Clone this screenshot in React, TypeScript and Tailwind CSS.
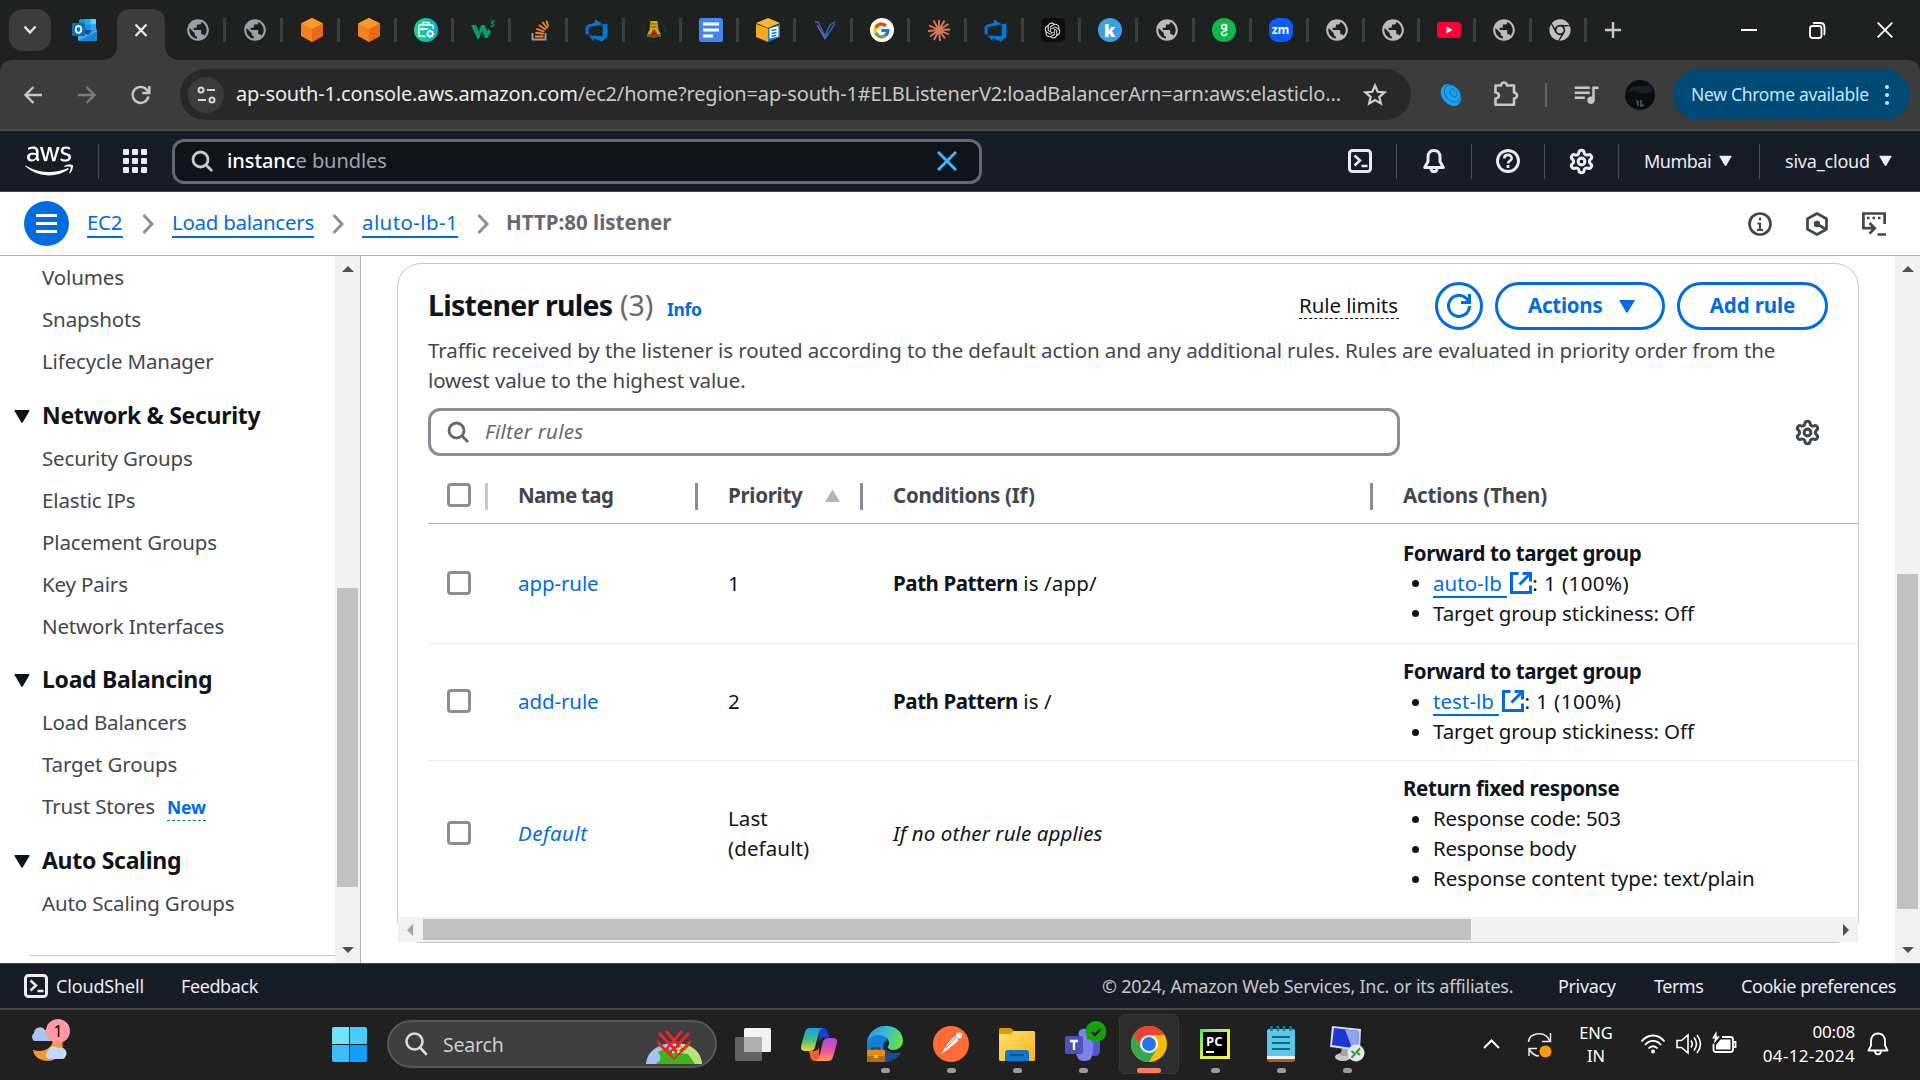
import React from "react";
import { Settings } from "lucide-react";
import { FaAws, FaChrome } from "react-icons/fa";
import { FcGoogle } from "react-icons/fc";
import { MdPublic, MdQueueMusic } from "react-icons/md";
import { VscAzureDevops } from "react-icons/vsc";
import { RiOpenaiFill } from "react-icons/ri";

/* ---------- tab favicons ---------- */

const Globe = ({ light }: { light?: boolean }) => (
  <MdPublic size={26} className={light ? "text-[#b9b9b9]" : "text-[#9aa0a6]"} />
);

const OrangeCube = () => (
  <svg width="24" height="24" viewBox="0 0 24 24">
    <path d="M12 0 23 5.500V18L12 24 1 18V5.500z" fill="#f58220" />
    <path d="M12 0 23 5.500 12 11 1 5.500z" fill="#fb9a2c" />
    <path d="M12 11 23 5.500V18L12 24z" fill="#ea6a1c" />
  </svg>
);

const Briefcase = () => (
  <svg width="24" height="24" viewBox="0 0 24 24">
    <defs>
      <linearGradient id="bcase" x1="0" y1="0" x2="1" y2="0">
        <stop offset=".2" stopColor="#0fd68c" />
        <stop offset="1" stopColor="#12a8e0" />
      </linearGradient>
    </defs>
    <circle cx="12" cy="12" r="12" fill="url(#bcase)" />
    <g fill="none" stroke="#fff" strokeWidth="1.500">
      <path d="M11.500 18.200H6a1.200 1.200 0 0 1-1.200-1.200V8.200A1.200 1.200 0 0 1 6 7h12a1.200 1.200 0 0 1 1.200 1.200V11M4.800 11H14M9 7V4.500h6V7M8.500 9.500v3" />
      <circle cx="16.200" cy="15.700" r="2.500" />
      <path d="M16.200 11.700v1.500M16.200 18.200v1.500M12.200 15.700h1.500M18.700 15.700h1.500M13.500 13l1 1M18 17.500l1 1M19 13l-1 1M14.500 17.500l-1 1" />
    </g>
  </svg>
);

const W3 = () => (
  <svg width="24" height="22" viewBox="0 0 24 22">
    <path d="M0 6h5l3 7 2-7h3.500l3 6 1-2.500 2.500 3.500-3.500 6h-2.500L11 12l-3 8H6.500z" fill="#04a068" />
    <path d="M19.500 2h3.300L20.800 4.500c3 .2 2.600 3.500-1.300 2.700" fill="none" stroke="#04a068" strokeWidth="1.200" />
  </svg>
);

const StackOverflow = () => (
  <svg width="18" height="21" viewBox="0 0 18 21" fill="none">
    <path d="M1.500 13v6.500H14.500V13" stroke="#9a9ca0" strokeWidth="1.900" />
    <path d="M4 16.500h8.500M4.300 12.800l8.400 1M5.300 8.800l8 2.800M7.800 5l7 4.700M11.500 2l5 6.500M15.500.7l2 6" stroke="#f48024" strokeWidth="1.900" />
  </svg>
);

const AzureIcon = () => <VscAzureDevops size={25} className="text-[#0078d7]" />;

const Temple = () => (
  <svg width="24" height="24" viewBox="0 0 24 24">
    <circle cx="12" cy="12" r="11" fill="#16241c" stroke="#1d4a30" strokeDasharray="2 1.500" />
    <path d="M8.500 3h7l1 9 2.500 4.500h-14l2.500-4.500z" fill="#d9a21b" />
    <path d="M9 6h6M9 9h6" stroke="#7c5a10" />
    <path d="M12 11l3 4v5H9v-5z" fill="#a12a2a" />
    <path d="M5 18h4M15 18h4" stroke="#8f7a1e" strokeWidth="1.500" />
  </svg>
);

const Docs = () => (
  <svg width="24" height="24" viewBox="0 0 24 24">
    <rect width="24" height="24" rx="2.500" fill="#4285f4" />
    <path d="M4 6h16M4 12h16M4 18h10" stroke="#fff" strokeWidth="3" />
  </svg>
);

const Box = () => (
  <svg width="25" height="24" viewBox="0 0 25 24">
    <path d="M1 5 13 0l12 5-12 5z" fill="#f7b733" />
    <path d="M1 6l12 4.500V24L1 19z" fill="#f3a820" />
    <path d="M13 10.500 25 6v13l-12 5z" fill="#147eba" />
    <path d="M14.500 10.500 23.500 8v10.500l-9 2z" fill="#fff" />
    <path d="M16.500 12.500l5-1M16.500 15.500l5-1M16.500 18.200l5-1" stroke="#147eba" strokeWidth="1.400" />
  </svg>
);

const Vee = () => (
  <svg width="22" height="20" viewBox="0 0 22 20" fill="none" strokeWidth="1.400">
    <path d="M1 2h3l7 14" stroke="#6a4bc4" />
    <path d="M3 5l8 13.500 3-5" stroke="#2b8fd8" />
    <path d="M21 2l-5 3-5.500 12M20.500 4l-8 13" stroke="#2570c9" />
  </svg>
);

const GoogleTab = () => (
  <span className="flex size-6 items-center justify-center rounded-full bg-white">
    <FcGoogle size={19} />
  </span>
);

const Burst = () => (
  <svg width="24" height="24" viewBox="-12 -12 24 24" stroke="#d97757" strokeWidth="1.900">
    <path d="M0 0 0-10M0 0 5.500-9.500M0 0 9.500-6M0 0 11-.5M0 0 10 4.500M0 0 6 8.500M0 0 1 11M0 0-5 10M0 0-9 6.500M0 0-11 1M0 0-10-4.500M0 0-5.500-9.500" />
  </svg>
);

const OpenAi = () => (
  <span className="flex size-6 items-center justify-center rounded-[5px] bg-[#0b0b0b]">
    <RiOpenaiFill size={19} className="text-[#e6e6e6]" />
  </span>
);

const KTab = () => (
  <span className="flex size-6 items-center justify-center rounded-full bg-[#3aa0e4] font-['Open_Sans',sans-serif] text-[17px] leading-none font-extrabold text-white">
    k
  </span>
);

const GreenG = () => (
  <svg width="24" height="24" viewBox="0 0 24 24">
    <circle cx="12" cy="12" r="12" fill="#0fb84c" />
    <circle cx="12" cy="8.700" r="2.300" fill="none" stroke="#fff" strokeWidth="1.500" />
    <path d="M14.500 6v6.500c-1 .8-4.500.6-4.800 2.800 0 3.200 5 3 5-.3" fill="none" stroke="#fff" strokeWidth="1.500" />
  </svg>
);

const Zoom = () => (
  <span className="flex size-6 items-center justify-center rounded-[9px] bg-[#0b5cff] font-['Open_Sans',sans-serif] text-[12px] leading-none font-bold text-white">
    zm
  </span>
);

const YouTube = () => (
  <svg width="24" height="16" viewBox="0 0 24 16">
    <rect width="24" height="16" rx="3" fill="#ff0033" />
    <path d="M9.500 4.500 15.500 8l-6 3.500z" fill="#fff" />
  </svg>
);

const wideTabs: React.ReactNode[] = [
  <Globe />, <Globe />, <OrangeCube />, <OrangeCube />, <Briefcase />, <W3 />,
  <StackOverflow />, <AzureIcon />, <Temple />, <Docs />,
  <Box />, <Vee />, <GoogleTab />, <Burst />, <AzureIcon />, <OpenAi />, <KTab />, <Globe light />,
  <GreenG />, <Zoom />,
];
const narrowTabs: React.ReactNode[] = [
  <Globe light />, <Globe light />, <YouTube />, <Globe light />,
  <FaChrome size={22} className="text-[#c0c0c0]" />,
];

const Outlook = () => (
  <svg width="25" height="24" viewBox="0 0 25 24">
    <rect x="7" y="1" width="17" height="16" rx="1.500" fill="#1490df" />
    <path d="M13 1h5.500v5.500H13z" fill="#28a8ea" />
    <path d="M18.500 1H24v5.500h-5.500z" fill="#50d9ff" />
    <path d="M18.500 6.500H24V12h-5.500z" fill="#28a8ea" />
    <path d="M13 12h5.500v5H13z" fill="#0a4a86" />
    <path d="M6 11l9.500 6L25 11v10.500a1.500 1.500 0 0 1-1.500 1.500h-16A1.500 1.500 0 0 1 6 21.500z" fill="#35b8f1" />
    <path d="M6 23l19-10v8.500a1.500 1.500 0 0 1-1.500 1.500z" fill="#1784d8" />
    <rect y="5" width="13" height="13" rx="1.300" fill="#0f6cbd" />
    <ellipse cx="6.500" cy="11.500" rx="2.800" ry="3.300" fill="none" stroke="#fff" strokeWidth="1.700" />
  </svg>
);

const TabStrip = () => (
  <div className="flex h-[60px] items-center bg-[#1f2120]">
    <div className="ml-[9px] flex size-[42px] shrink-0 items-center justify-center rounded-[14px] bg-[#3c3c3c]">
      <svg width="14" height="10" viewBox="0 0 14 10" fill="none" stroke="#e3e3e3" strokeWidth="2.500">
        <path d="M1.500 1.500 7 7.500l5.500-6" />
      </svg>
    </div>
    <div className="ml-[21px] w-[25px] shrink-0">
      <Outlook />
    </div>
    <div className="ml-[4px] flex h-full w-[80px] shrink-0 items-end">
      <svg width="80" height="51" viewBox="0 0 80 51">
        <path d="M0 51C10 51 16 46 16 36V14Q16 0 30 0H50Q64 0 64 14V36C64 46 70 51 80 51z" fill="#3c3c3c" />
        <path d="M34.500 15.500l11 11.500M45.500 15.500l-11 11.500" stroke="#e8e8e8" strokeWidth="2.300" />
      </svg>
    </div>
    <div className="-ml-[12px] flex shrink-0 items-center">
      {wideTabs.map((icon, i) => (
        <div key={i} className="flex h-6 w-[57px] items-center justify-center border-r-[3px] border-[#3d3f3e] pl-[3px]">
          {icon}
        </div>
      ))}
      {narrowTabs.map((icon, i) => (
        <div key={i} className="flex h-6 w-[55.700px] items-center justify-center border-r-[3px] border-[#3d3f3e] pl-[4px]">
          {icon}
        </div>
      ))}
    </div>
    <svg className="ml-[17px] shrink-0" width="18" height="18" viewBox="0 0 18 18" stroke="#c7c7c7" strokeWidth="2.400">
      <path d="M9 1v16M1 9h16" />
    </svg>
    <div className="ml-auto flex pr-[1px]">
      <div className="flex w-[68px] items-center justify-center">
        <span className="h-[2px] w-[16px] bg-white" />
      </div>
      <div className="flex w-[68px] items-center justify-center">
        <svg width="17" height="17" viewBox="0 0 17 17" fill="none" stroke="#fff" strokeWidth="1.800">
          <rect x="1" y="4" width="11.500" height="12" rx="2.500" />
          <path d="M4 1.500Q4.500 1 6 1h5Q15.500 1 15.500 5.500V11q0 1.500-.7 2" />
        </svg>
      </div>
      <div className="flex w-[68px] items-center justify-center">
        <svg width="16" height="16" viewBox="0 0 16 16" stroke="#fff" strokeWidth="1.900">
          <path d="M.7.7l14.600 14.600M15.300.7.7 15.300" />
        </svg>
      </div>
    </div>
  </div>
);

const Toolbar = () => (
  <div className="bg-[#1f2120]">
    <div className="flex h-[71px] items-center rounded-t-[12px] border-b-2 border-[#4a4c4b] bg-[#3c3c3c]">
      <svg className="ml-[24px] shrink-0" width="19" height="18" viewBox="0 0 19 18" fill="none" stroke="#c7c7c7" strokeWidth="2.300">
        <path d="M9.500 1 1.500 9l8 8M1.500 9H18" />
      </svg>
      <svg className="ml-[34px] shrink-0" width="19" height="18" viewBox="0 0 19 18" fill="none" stroke="#7b7b7b" strokeWidth="2.300">
        <path d="M9.500 1l8 8-8 8M17.500 9H1" />
      </svg>
      <svg className="ml-[35px] shrink-0" width="20" height="20" viewBox="0 0 20 20" fill="none" stroke="#c7c7c7" strokeWidth="2.400">
        <path d="M17.500 11.500A8 8 0 1 1 16 5l2 2.500M18.300 1v7h-7" />
      </svg>
      <div className="ml-[29px] flex h-[51px] w-[1231px] shrink-0 items-center rounded-full bg-[#282828]">
        <div className="ml-[8px] flex size-[36px] items-center justify-center rounded-full bg-[#3c3c3c]">
          <svg width="19" height="18" viewBox="0 0 19 18" fill="none" stroke="#d6d6d6" strokeWidth="2">
            <circle cx="4" cy="4" r="2.500" />
            <path d="M10 4h8M1 14h8" />
            <circle cx="15" cy="14" r="2.500" />
          </svg>
        </div>
        <div className="ml-[12px] w-[1106px] pb-px font-['Noto_Sans',sans-serif] text-[20px] leading-none tracking-[-0.160px] whitespace-nowrap text-[#c7c7c7]">
          <span className="text-[#ececec]">ap-south-1.console.aws.amazon.com</span>
          /ec2/home?region=ap-south-1#ELBListenerV2:loadBalancerArn=arn:aws:elasticlo...
        </div>
        <svg className="ml-[21px]" width="24" height="23" viewBox="0 0 24 23" fill="none" stroke="#d0d0d0" strokeWidth="2.200">
          <path d="M12 2.500l2.700 6.300 6.800.6-5.200 4.500 1.600 6.700L12 17.100l-5.900 3.500 1.600-6.700L2.500 9.400l6.800-.6z" />
        </svg>
      </div>
      <svg className="ml-[29px] shrink-0" width="22" height="22" viewBox="0 0 22 22" fill="none">
        <ellipse cx="11" cy="11" rx="9" ry="12" transform="rotate(-40 11 11)" fill="#1ea0f2" />
        <ellipse cx="12.500" cy="9.500" rx="7" ry="9.500" transform="rotate(-40 12.500 9.500)" stroke="#1468a8" strokeWidth=".9" />
        <ellipse cx="13.500" cy="9" rx="3" ry="4.500" transform="rotate(-40 13.500 9)" stroke="#1468a8" strokeWidth=".9" />
      </svg>
      <svg className="mb-[2px] ml-[31px] shrink-0" width="26" height="26" viewBox="0 0 26 26" fill="none" stroke="#c7c7c7" strokeWidth="2.600" strokeLinejoin="round">
        <path d="M2.500 4.500H8a3 3 0 0 1 6 0h7v7a3 3 0 0 1 0 6v6.200H2.500v-6.200c4.500-.5 4.500-5.500 0-6z" />
      </svg>
      <span className="ml-[26px] h-6 w-[2px] shrink-0 bg-[#666]" />
      <MdQueueMusic size={30} className="mb-[2px] ml-[24px] shrink-0 text-[#c7c7c7]" />
      <svg className="ml-[24px] shrink-0" width="30" height="30" viewBox="0 0 30 30">
        <circle cx="15" cy="15" r="15" fill="#0b0d12" />
        <path d="M4 10q5-5 11-4t10-1l2 6q-8 4-14 1T3 13z" fill="#1c2028" />
        <path d="M11 21l2 1v4M16 20v6l3-1" stroke="#4e6152" strokeWidth="1.500" fill="none" />
      </svg>
      <div className="ml-[18px] flex h-[51px] w-[237px] shrink-0 items-center rounded-full bg-[#004a77] pl-[18px]">
        <span className="w-[180px] font-['Noto_Sans',sans-serif] text-[17.500px] leading-none tracking-[-0.300px] whitespace-nowrap text-[#c2e7ff]">
          New Chrome available
        </span>
        <span className="ml-[14px] flex flex-col gap-[4px]">
          <i className="size-[4px] rounded-full bg-[#c2e7ff]" />
          <i className="size-[4px] rounded-full bg-[#c2e7ff]" />
          <i className="size-[4px] rounded-full bg-[#c2e7ff]" />
        </span>
      </div>
    </div>
  </div>
);

/* ---------- console icons ---------- */

const SearchIcon = ({ color }: { color: string }) => (
  <svg className="shrink-0" width="24" height="24" viewBox="0 0 16 16" fill="none" stroke={color} strokeWidth="1.900">
    <circle cx="7" cy="7" r="5" />
    <path d="M10.700 10.700 14.700 14.700" />
  </svg>
);

const ShellIcon = () => (
  <svg width="24" height="24" viewBox="0 0 24 24" fill="none" stroke="#ebebf0" strokeWidth="3">
    <rect x="1.500" y="1.500" width="21" height="21" rx="3" />
    <path d="M6.500 6.500l5.500 5-5.500 5M13.500 17h6" strokeWidth="2.500" />
  </svg>
);

const BellIcon = () => (
  <svg width="24" height="24" viewBox="0 0 24 24" fill="none" stroke="#ebebf0" strokeWidth="3">
    <path d="M12 1.500c-3.800 0-6 2.800-6 6.500v4.500L2.700 18.500h18.600L18 12.500V8c0-3.700-2.200-6.500-6-6.500z" strokeLinejoin="round" />
    <path d="M9 19c0 2.500 1.200 3.700 3 3.700s3-1.200 3-3.700" />
  </svg>
);

const HelpIcon = () => (
  <svg width="24" height="24" viewBox="0 0 24 24" fill="none" stroke="#ebebf0" strokeWidth="2.900">
    <circle cx="12" cy="12" r="10.500" />
    <path d="M8.200 9.500c.2-5 7.700-4.600 7.500 0-.2 2.300-3.700 2.300-3.700 5" strokeWidth="2.600" />
    <path d="M12 16v3" strokeWidth="2.800" />
  </svg>
);

const CaretDown = ({ className }: { className: string }) => (
  <svg className={className} viewBox="0 0 16 13" fill="currentColor">
    <path d="M1.200 0h13.600q1.200 0 .7 1L8.800 12.200q-.8 1-1.600 0L.5 1Q0 0 1.200 0z" />
  </svg>
);

const NavSep = () => <span className="h-[35px] w-px shrink-0 bg-[#4a4e58]" />;

const ConsoleNav = () => (
  <div className="flex h-[61px] items-center border-b border-[#424650] bg-[#161d26] font-['Noto_Sans',sans-serif]">
    <FaAws size={48} className="ml-[25px] shrink-0 text-white" />
    <span className="ml-[25px] h-[35px] w-px shrink-0 bg-[#4a4e58]" />
    <div className="ml-[24px] grid shrink-0 grid-cols-3 gap-[3px]">
      {Array.from({ length: 9 }, (_, i) => (
        <i key={i} className="size-[6px] rounded-[1px] bg-[#ebebf0]" />
      ))}
    </div>
    <div className="ml-[25px] flex h-[45px] w-[810px] shrink-0 items-center rounded-[12px] border-[3px] border-[#656871] bg-[#0f141a] pl-[15px]">
      <SearchIcon color="#c6c6cd" />
      <span className="ml-[13px] w-[700px] text-[20px] leading-none tracking-[-0.080px] whitespace-nowrap text-[#a0a3ab]">
        <b className="font-medium text-white">instanc</b>e bundles
      </span>
      <svg className="ml-[10px]" width="20" height="20" viewBox="0 0 20 20" stroke="#42b4ff" strokeWidth="3">
        <path d="M1 1l18 18M19 1 1 19" />
      </svg>
    </div>
    <div className="ml-auto flex items-center">
      <div className="mr-[24px]"><ShellIcon /></div>
      <NavSep />
      <div className="flex w-[74px] justify-center"><BellIcon /></div>
      <NavSep />
      <div className="flex w-[72px] justify-center"><HelpIcon /></div>
      <NavSep />
      <div className="flex w-[73px] justify-center">
        <Settings size={27} strokeWidth={2.700} className="text-[#ebebf0]" />
      </div>
      <NavSep />
      <div className="flex w-[140px] items-center pl-[25px] text-[18px] leading-none text-[#ebebf0]">
        <span className="w-[75px] tracking-[-0.500px]">Mumbai</span>
        <CaretDown className="h-[12px] w-[13px]" />
      </div>
      <NavSep />
      <div className="flex w-[160px] items-center pl-[25px] text-[18px] leading-none text-[#ebebf0]">
        <span className="w-[94px] tracking-[-0.200px]">siva_cloud</span>
        <CaretDown className="h-[12px] w-[13px]" />
      </div>
    </div>
  </div>
);

const Chevron = () => (
  <svg className="shrink-0" width="12" height="20" viewBox="0 0 12 20" fill="none" stroke="#8c8c94" strokeWidth="2.900">
    <path d="M1.500 1 10 10l-8.500 9" />
  </svg>
);

const Crumbs = () => (
  <div className="flex h-[64px] items-center border-b border-[#b4b4bb] bg-white font-['Noto_Sans',sans-serif] text-[20.500px] leading-[26px] whitespace-nowrap text-[#006ce0]">
    <div className="ml-[24px] flex size-[45px] shrink-0 flex-col items-center justify-center gap-[5px] rounded-full bg-[#006ce0]">
      <i className="h-[3px] w-[21px] bg-white" />
      <i className="h-[3px] w-[21px] bg-white" />
      <i className="h-[3px] w-[21px] bg-white" />
    </div>
    <span className="ml-[18px] w-[36px] border-b-2 border-[#006ce0] pb-px tracking-[-0.300px]">EC2</span>
    <div className="flex w-[49px] justify-center"><Chevron /></div>
    <span className="w-[142px] border-b-2 border-[#006ce0] pb-px tracking-[-0.280px]">Load balancers</span>
    <div className="flex w-[48px] justify-center"><Chevron /></div>
    <span className="w-[96px] border-b-2 border-[#006ce0] pb-px tracking-[0.400px]">aluto-lb-1</span>
    <div className="flex w-[49px] justify-center"><Chevron /></div>
    <span className="-ml-px border-b-2 border-transparent pb-px font-bold text-[#656871]">HTTP:80 listener</span>
    <div className="ml-auto flex items-center gap-[33px] pr-[34px]">
      <svg width="24" height="24" viewBox="0 0 24 24" fill="none" stroke="#424650">
        <circle cx="12" cy="12" r="10.500" strokeWidth="2.700" />
        <path d="M12 5.500v3M9.500 11.500H12V18M9 18h6" strokeWidth="2.200" />
      </svg>
      <svg width="24" height="24" viewBox="0 0 24 24" fill="none" stroke="#424650" strokeWidth="2.700">
        <path d="M12 1.500l9.500 5.300v10.400L12 22.500l-9.500-5.300V6.800z" strokeLinejoin="round" />
        <circle cx="12" cy="12" r="3.200" fill="#424650" stroke="none" />
        <path d="M12 12l8.500 5" />
      </svg>
      <svg width="24" height="24" viewBox="0 0 24 24" fill="none" stroke="#424650" strokeWidth="2.700">
        <path d="M22.600 12V1.500H1.400v14.700H12M7.500 11l5.300 5.300L7.500 21.600M15.500 22.500H24" />
        <path d="M5 6h2.500M10.500 6H13M16 6h2.500" />
      </svg>
    </div>
  </div>
);

/* ---------- sidebar ---------- */

const groups: { title?: string; gap: string; items: { label: string; isNew?: boolean }[] }[] = [
  { gap: "", items: [{ label: "Volumes" }, { label: "Snapshots" }, { label: "Lifecycle Manager" }] },
  {
    title: "Network & Security",
    gap: "mt-[12px]",
    items: [
      { label: "Security Groups" }, { label: "Elastic IPs" }, { label: "Placement Groups" },
      { label: "Key Pairs" }, { label: "Network Interfaces" },
    ],
  },
  {
    title: "Load Balancing",
    gap: "mt-[11px]",
    items: [{ label: "Load Balancers" }, { label: "Target Groups" }, { label: "Trust Stores", isNew: true }],
  },
  { title: "Auto Scaling", gap: "mt-[12px]", items: [{ label: "Auto Scaling Groups" }] },
];

const ScrollArrow = ({ d, dim }: { d: string; dim?: boolean }) => (
  <svg width="12" height="12" viewBox="0 0 12 12" fill={dim ? "#a3a3a3" : "#505050"}>
    <path d={d} />
  </svg>
);

const UP = "M0 9h12L6 3z";
const DOWN = "M0 3h12L6 9z";
const LEFT = "M9 0v12L3 6z";
const RIGHT = "M3 0v12l6-6z";

const Sidebar = () => (
  <aside className="flex w-[361px] shrink-0 border-r border-[#b4b4bb] bg-white">
    <nav className="flex-1 font-['Noto_Sans',sans-serif] text-[20.500px] leading-[42px] tracking-[-0.140px] whitespace-nowrap text-[#424650]">
      {groups.map((g, i) => (
        <div key={i} className={g.gap}>
          {g.title && (
            <div className="mb-px flex h-[42px] items-center text-[23px] font-bold tracking-[-0.300px] text-[#0f141a]">
              <CaretDown className="mt-[2px] mr-[12px] ml-[14px] h-[13px] w-[16px]" />
              {g.title}
            </div>
          )}
          {g.items.map((it) => (
            <div key={it.label} className="flex h-[42px] items-center pl-[42px]">
              {it.label}
              {it.isNew && (
                <span className="mt-[3px] ml-[12px] border-b border-dashed border-[#006ce0] text-[17.500px] leading-[26px] font-bold text-[#006ce0]">
                  New
                </span>
              )}
            </div>
          ))}
        </div>
      ))}
      <hr className="mt-[31px] ml-[30px] border-[#c6c6cd]" />
    </nav>
    <div className="flex w-[25px] flex-col items-center bg-[#f1f1f1] pt-[7px] pb-[7px]">
      <ScrollArrow d={UP} />
      <div className="mt-[313px] h-[299px] w-[21px] bg-[#c1c1c1]" />
      <span className="mt-auto h-3"><ScrollArrow d={DOWN} /></span>
    </div>
  </aside>
);

/* ---------- rules panel ---------- */

const Check = () => <span className="ml-[19px] block size-6 rounded-[4px] border-[3px] border-[#8c8c94] bg-white" />;

const External = () => (
  <svg className="ml-[3px] inline-block align-[-3px]" width="22" height="22" viewBox="0 0 22 22" fill="none" stroke="#006ce0" strokeWidth="3">
    <path d="M8.500 1.500h-7v19h19v-7M12.500 1.500h8v8M20 2 9.500 12.500" />
  </svg>
);

const Bullets = ({ title, items }: { title: string; items: React.ReactNode[] }) => (
  <div className="leading-[30px]">
    <b className="block tracking-[-0.400px]">{title}</b>
    {items.map((it, i) => (
      <div key={i} className="flex h-[30px] items-center pl-[9px]">
        <i className="mt-[2px] mr-[14px] size-[7px] rounded-full bg-[#0f141a]" />
        <span>{it}</span>
      </div>
    ))}
  </div>
);

const TargetLink = ({ name }: { name: string }) => (
  <>
    <span className="inline-block border-b-2 border-[#006ce0] leading-[26px] tracking-[0.050px] text-[#006ce0]">{name}&nbsp;</span>
    <External />
    <span className="tracking-[0.450px]">: 1 (100%)</span>
  </>
);

const columns = "grid grid-cols-[90px_210px_165px_510px_1fr]";

const rows = [
  {
    name: "app-rule", h: "h-[120px]", priority: "1",
    cond: <><b className="tracking-[-0.430px]">Path Pattern</b> <span className="tracking-[0.150px]">is /app/</span></>,
    action: <Bullets title="Forward to target group" items={[<TargetLink name="auto-lb" />, "Target group stickiness: Off"]} />,
  },
  {
    name: "add-rule", h: "h-[117px]", priority: "2",
    cond: <><b className="tracking-[-0.430px]">Path Pattern</b> <span className="tracking-[0.150px]">is /</span></>,
    action: <Bullets title="Forward to target group" items={[<TargetLink name="test-lb" />, "Target group stickiness: Off"]} />,
  },
  {
    name: "Default", h: "h-[146px]", priority: "Last (default)", italic: true,
    cond: <i className="tracking-[0.100px]">If no other rule applies</i>,
    action: <Bullets title="Return fixed response" items={[<span className="tracking-[-0.180px]">Response code: 503</span>, <span className="tracking-[-0.280px]">Response body</span>, <span className="tracking-[-0.020px]">Response content type: text/plain</span>]} />,
  },
];

const RulesPanel = () => (
  <section className="mt-[7px] ml-[36px] flex h-[680px] w-[1462px] shrink-0 flex-col rounded-[24px] border border-[#c6c6cd] bg-white font-['Noto_Sans',sans-serif] text-[20.500px] tracking-[-0.090px] whitespace-nowrap text-[#0f141a]">
    <div className="mt-[18px] flex h-12 items-center pl-[30px]">
      <h2 className="w-[192px] pb-[2px] text-[28.500px] leading-none font-bold tracking-[-0.750px]">Listener rules</h2>
      <span className="w-[47px] pb-[2px] text-[28.500px] leading-none tracking-[-0.100px] text-[#656871]">(3)</span>
      <b className="mt-[7px] text-[17.500px] leading-none tracking-[-0.300px] text-[#006ce0]">Info</b>
      <div className="ml-auto flex items-center pr-[30px]">
        <span className="mb-px w-[100px] border-b border-dashed border-[#0f141a] leading-[26px]">Rule limits</span>
        <span className="ml-[36px] flex size-12 items-center justify-center rounded-full border-[3px] border-[#006ce0]">
          <svg width="24" height="24" viewBox="0 0 24 24" fill="none" stroke="#006ce0" strokeWidth="3">
            <path d="M22.500 12A10.500 10.500 0 1 1 19.500 4.500L22 7.500M22.500 0v8.500H14" />
          </svg>
        </span>
        <span className="ml-[12px] flex h-12 w-[170px] items-center rounded-full border-[3px] border-[#006ce0] pl-[30px] font-bold text-[#006ce0]">
          <span className="w-[91px] pb-[2px] tracking-[-0.250px]">Actions</span>
          <CaretDown className="h-[13px] w-[16px]" />
        </span>
        <span className="ml-[12px] flex h-12 w-[151px] items-center justify-center rounded-full border-[3px] border-[#006ce0] pb-[2px] font-bold text-[#006ce0]">
          Add rule
        </span>
      </div>
    </div>
    <p className="mt-[5px] pl-[30px] leading-[30px] text-[#424650]">
      Traffic received by the listener is routed according to the default action and any additional rules. Rules are evaluated in priority order from the
      <br />
      lowest value to the highest value.
    </p>
    <div className="mt-[13px] flex h-12 items-center pl-[30px]">
      <div className="flex h-12 w-[972px] items-center rounded-[12px] border-[3px] border-[#8c8c94] pl-[15px]">
        <SearchIcon color="#656871" />
        <i className="ml-[15px] pb-[2px] leading-none tracking-[0.250px] text-[#656871]">Filter rules</i>
      </div>
      <Settings size={27} strokeWidth={2.700} className="ml-[394px] text-[#424650]" />
    </div>
    <div className="ml-[30px] flex-1">
      <div className={`${columns} mt-[14px] h-[54px] items-center border-b border-[#b4b4bb] pb-[3px] font-bold tracking-[-0.280px] text-[#424650]`}>
        <div className="flex items-center">
          <Check />
          <i className="mt-[2px] ml-[14px] h-[27px] w-[3px] bg-[#c6c6cd]" />
        </div>
        <div className="flex items-center justify-between pr-[30px]">
          <span className="tracking-[-0.680px]">Name tag</span>
          <i className="mt-[2px] h-[27px] w-[3px] bg-[#8c8c94]" />
        </div>
        <div className="flex items-center">
          <span className="w-[97px]">Priority</span>
          <CaretDown className="mt-[2px] h-[12px] w-[15px] rotate-180 text-[#b4b4bb]" />
          <i className="mt-[2px] ml-[20px] h-[27px] w-[3px] bg-[#8c8c94]" />
        </div>
        <div className="flex items-center justify-between pr-[30px]">
          Conditions (If)<i className="mt-[2px] h-[27px] w-[3px] bg-[#8c8c94]" />
        </div>
        <div className="tracking-[-0.150px]">Actions (Then)</div>
      </div>
      {rows.map((r, i) => (
        <div key={r.name} className={`${columns} ${r.h} items-center pb-[2px] leading-[30px] ${i < 2 ? "border-b border-[#ebebf0]" : ""}`}>
          <Check />
          <span className={r.italic ? "tracking-[0.500px] text-[#006ce0] italic" : "text-[#006ce0]"}>{r.name}</span>
          <span className="w-[90px] tracking-[0.100px] whitespace-normal">{r.priority}</span>
          <span>{r.cond}</span>
          {r.action}
        </div>
      ))}
    </div>
    <div className="flex h-[25px] items-center bg-[#f1f1f1] px-[6px]">
      <ScrollArrow d={LEFT} dim />
      <span className="ml-[7px] h-[21px] w-[1048px] bg-[#c1c1c1]" />
      <span className="ml-auto"><ScrollArrow d={RIGHT} /></span>
    </div>
  </section>
);

const ConsoleFooter = () => (
  <footer className="flex h-[45px] items-center border-t border-[#424650] bg-[#161d26] font-['Noto_Sans',sans-serif] text-[18px] leading-none tracking-[-0.500px] whitespace-nowrap text-[#ebebf0]">
    <span className="ml-[24px]"><ShellIcon /></span>
    <span className="ml-[8px] w-[125px] tracking-[-0.150px]">CloudShell</span>
    <span className="tracking-[-0.400px]">Feedback</span>
    <div className="ml-auto flex">
      <span className="w-[456px] tracking-[-0.240px] text-[#c6c6cd]">© 2024, Amazon Web Services, Inc. or its affiliates.</span>
      <span className="w-[96px] tracking-[-0.350px]">Privacy</span>
      <span className="w-[87px]">Terms</span>
      <span className="w-[179px] tracking-[-0.430px]">Cookie preferences</span>
    </div>
  </footer>
);

/* ---------- taskbar ---------- */

const taskIcons: { icon: React.ReactNode; dot?: boolean; active?: boolean }[] = [
  {
    icon: (
      <svg width="36" height="33" viewBox="0 0 36 33">
        <rect x="9" y="0" width="27" height="24" rx="1.500" fill="#f2f2f2" />
        <rect x="0" y="9" width="27" height="24" rx="1.500" fill="#636363" />
        <path d="M9 9h18v15H9z" fill="#aeaeae" />
      </svg>
    ),
  },
  {
    icon: (
      <svg width="36" height="33" viewBox="0 0 36 33" fill="none">
        <defs>
          <linearGradient id="cpA" x1="0" y1="0" x2="0" y2="1"><stop stopColor="#1a9fe8" /><stop offset=".5" stopColor="#3bbf8a" /><stop offset="1" stopColor="#f4d02a" /></linearGradient>
          <linearGradient id="cpB" x1="0" y1="0" x2="0" y2="1"><stop stopColor="#a64be8" /><stop offset=".6" stopColor="#f0559a" /><stop offset="1" stopColor="#ffa04a" /></linearGradient>
        </defs>
        <path d="M18 0h4q3.500 0 4.500 3.500l1.800 6h-5q-4 0-5 4z" fill="#1740d0" />
        <path d="M18 33h-4q-3.500 0-4.500-3.500L8 23h5q4 0 5-4z" fill="#f0602f" />
        <path d="M9 0h13q-3 .5-4 4l-4 15q-1 4-5 4H4q-5 0-4-5L4 4q1-4 5-4z" fill="url(#cpA)" />
        <path d="M27 33H14q3-.5 4-4l4-15q1-4 5-4h5q5 0 4 5l-4 14q-1 4-5 4z" fill="url(#cpB)" />
      </svg>
    ),
  },
  {
    dot: true,
    icon: (
      <svg width="36" height="36" viewBox="0 0 36 36">
        <defs>
          <linearGradient id="edA" x1="0" y1="0" x2="1" y2=".3"><stop stopColor="#2492dc" /><stop offset=".5" stopColor="#35b8e0" /><stop offset="1" stopColor="#62e04e" /></linearGradient>
        </defs>
        <path d="M18 16c-2 8 3 13 16 10-2 6-9 10-16 10z" fill="#144f94" />
        <path d="M0 24C-1 12 5 7 12 7c6 0 9 4 8 8-3 0-5 4-3 9z" fill="#1580d2" />
        <path d="M0 17C2-6 36-5 36 15c0 9-12 11-15 7-1-1 1-2 1-5 0-5-5-8-11-8C5 9 1 13 0 20z" fill="url(#edA)" />
        <path d="M0 24h18v12H0z" fill="#b86a12" />
        <path d="M0 24h18v6H0z" fill="#dd8f1e" />
        <path d="M5 24v-2h7v2" fill="none" stroke="#5a330c" strokeWidth="1.500" />
        <rect x="7.500" y="29" width="3" height="3" fill="#ffd76a" />
      </svg>
    ),
  },
  {
    dot: true,
    icon: (
      <svg width="36" height="36" viewBox="0 0 36 36">
        <circle cx="18" cy="18" r="18" fill="#ff6c37" />
        <path d="M8 28l2-3 6-9 6-6 3 3-7 8-7 5z" fill="#fff" />
        <circle cx="26" cy="9.500" r="3" fill="#fff" />
        <path d="M13 22l11-11M17 22l9-8" stroke="#ff6c37" strokeWidth="1" />
        <path d="M18 20l7-6" stroke="#fff" strokeWidth="1.500" />
      </svg>
    ),
  },
  {
    dot: true,
    icon: (
      <svg width="36" height="33" viewBox="0 0 36 33">
        <defs>
          <linearGradient id="fold" x1="0" y1="0" x2="1" y2="1"><stop stopColor="#ffdf74" /><stop offset="1" stopColor="#fbb80f" /></linearGradient>
        </defs>
        <path d="M0 1.500Q0 0 1.500 0H11q1.500 0 2.500 1.500L16 4v5H0z" fill="#dc9c05" />
        <path d="M0 6h12l3-3h19.500Q36 3 36 4.500v27q0 1.500-1.500 1.500h-33Q0 33 0 31.500z" fill="url(#fold)" />
        <path d="M6 33v-8q0-3 3-3h18q3 0 3 3v8z" fill="#1277c8" />
        <path d="M11 27h14" stroke="#0a4f8f" strokeWidth="1.800" />
      </svg>
    ),
  },
  {
    dot: true,
    icon: (
      <svg className="mb-[7px] ml-[5px]" width="42" height="40" viewBox="0 0 42 40">
        <circle cx="19" cy="13" r="5.500" fill="#7b83eb" />
        <path d="M25 20h10v9q0 6-5 6t-5-6z" fill="#5059c9" />
        <path d="M11 18h17v12q0 10-8.500 10T11 30z" fill="#7b83eb" />
        <rect x="0" y="15" width="18" height="18" rx="2" fill="#4b53bc" />
        <path d="M5 20h8M9 20v9" stroke="#fff" strokeWidth="2.300" />
        <circle cx="31" cy="10.500" r="10.500" fill="#13a10e" />
        <path d="M27 11l3 3 5.500-6" fill="none" stroke="#111" strokeWidth="2" />
      </svg>
    ),
  },
  {
    active: true,
    icon: (
      <svg width="36" height="36" viewBox="0 0 36 36">
        <circle cx="18" cy="18" r="18" fill="#fbbc05" />
        <path d="M2.400 9A18 18 0 0 1 33.600 9H18L10 22z" fill="#ea4335" />
        <path d="M2.400 9A18 18 0 0 0 18 36l8-13.500H10z" fill="#34a853" />
        <circle cx="18" cy="18" r="9" fill="#fff" />
        <circle cx="18" cy="18" r="7" fill="#2a74e8" />
      </svg>
    ),
  },
  {
    dot: true,
    icon: (
      <span className="flex size-[30px] flex-col bg-linear-to-br from-[#21e766] via-[#d8f04a] to-[#fcf84a] p-[3px]">
        <span className="flex flex-1 flex-col bg-black pt-[2px] pl-[3px] font-['Open_Sans',sans-serif] text-[13px] leading-[15px] font-bold text-white">
          PC
          <i className="mt-[2px] h-[2px] w-[8px] bg-white" />
        </span>
      </span>
    ),
  },
  {
    dot: true,
    icon: (
      <svg width="30" height="36" viewBox="0 0 30 36">
        <rect x="1" y="3" width="28" height="28" rx="2" fill="#5cc8e6" />
        <path d="M1 30h28v3H1z" fill="#f3f3f3" />
        <path d="M1 33h28v1q0 2-2 2H3q-2 0-2-2z" fill="#b45a12" />
        <path d="M6 11h18M6 17h18M6 23h18" stroke="#0b6a90" strokeWidth="2" />
        <path d="M5.500 0v5M12 0v5M18 0v5M24.500 0v5" stroke="#127fa6" strokeWidth="2.600" />
      </svg>
    ),
  },
  {
    dot: true,
    icon: (
      <svg width="36" height="36" viewBox="0 0 36 36">
        <ellipse cx="14" cy="31" rx="8" ry="4" fill="#c9c9c9" />
        <path d="M13 22h6l1 8h-9z" fill="#a5a5a5" />
        <path d="M3 0l29 3-1 22L1 21z" fill="#d7dbe2" />
        <path d="M5 2l25 3-1 18L3 19z" fill="#1c35d6" />
        <path d="M16 3.500l14 1.500-1 18-6-1z" fill="#8fa4f2" />
        <circle cx="27" cy="27" r="8.500" fill="#e8e8e8" />
        <path d="M22.500 25l3.500 3-3.500 3.500M31 22.500l-3.500 3.500 3.500 3" fill="none" stroke="#2e9b3a" strokeWidth="2" />
      </svg>
    ),
  },
];

const Weather = () => (
  <div className="relative ml-[28px] h-[46px] w-[44px] shrink-0">
    <svg width="44" height="46" viewBox="0 0 44 46">
      <path d="M5 30c10 3 18-1 20-9h9c3 10-4 19-13 20-9 0-15-4-16-11z" fill="#f39a2b" />
      <path d="M6 21a5 5 0 0 1 0-8 6 6 0 0 1 11-3 7 7 0 0 1 6 11z" fill="#a9c4f2" />
      <path d="M20 39a5 5 0 0 1 0-8 6 6 0 0 1 10-3 6 6 0 0 1 5 11z" fill="#c3d8fa" />
    </svg>
    <span className="absolute -top-[1px] right-[2px] flex size-6 items-center justify-center rounded-full bg-[#ff99a4] font-['Noto_Sans',sans-serif] text-[16px] text-black">
      1
    </span>
  </div>
);

const Taskbar = () => (
  <div className="flex h-[72px] items-center border-t-2 border-[#484848] bg-[#202020] pb-[2px] font-['Noto_Sans',sans-serif] whitespace-nowrap">
    <div className="w-[332px] pb-[3px]"><Weather /></div>
    <div className="grid size-[35px] shrink-0 grid-cols-2 gap-[1px]">
      <i className="rounded-tl-[2px] bg-[#6fe4fb]" />
      <i className="rounded-tr-[2px] bg-[#48cdfb]" />
      <i className="rounded-bl-[2px] bg-[#3dbdfb]" />
      <i className="rounded-br-[2px] bg-[#149dfa]" />
    </div>
    <div className="ml-[20px] flex h-[48px] w-[330px] shrink-0 items-center rounded-full border-2 border-[#565656] bg-[#3e3e3e]">
      <svg className="ml-[16px]" width="23" height="24" viewBox="0 0 23 24" fill="none" stroke="#dcdcdc" strokeWidth="2.600">
        <circle cx="9.500" cy="9.500" r="8" />
        <path d="M15 15.500l6 6.500" strokeLinecap="round" />
      </svg>
      <span className="ml-[15px] w-[203px] pt-[2px] text-[19.500px] leading-none tracking-[-0.200px] text-[#cfcfcf]">Search</span>
      <svg className="mt-[7px]" width="56" height="35" viewBox="0 0 56 35">
        <path d="M0 34C2 6 54 6 56 34z" fill="#9fc4f2" />
        <path d="M28 13c18 0 27 9 28 21H30z" fill="#b9e07c" />
        <path d="M12 22q9-6 15 0l15 2 7 10H10q8-5 2-12z" fill="#3fb618" />
        <path d="M11 9 28 28 45 9l-1 6-16 15-16-15z" fill="#e8262b" />
        <path d="M13 3 33 24M20 1l16 19M43 3 23 24M36 1 20 20" stroke="#e8262b" strokeWidth="3" />
        <path d="M23 18h2M28 15h2M33 18h2M26 22h2M31 22h2" stroke="#fff" strokeWidth="2" />
      </svg>
    </div>
    <div className="ml-[3px] flex shrink-0">
      {taskIcons.map((t, i) => (
        <div key={i} className="flex w-[66px] justify-center">
          <div className={`relative flex h-[60px] w-[60px] items-center justify-center rounded-[6px] ${t.active ? "border border-[#3a3a3a] bg-[#2d2d2d]" : ""}`}>
            {t.icon}
            {t.dot && <i className="absolute bottom-[1px] h-[5px] w-[9px] rounded-full bg-[#9a9a9a]" />}
            {t.active && <i className="absolute bottom-0 h-[5px] w-6 rounded-full bg-[#f47d62]" />}
          </div>
        </div>
      ))}
    </div>
    <div className="ml-auto flex items-center pr-[31px] text-white">
      <svg width="17" height="10" viewBox="0 0 17 10" fill="none" stroke="#fff" strokeWidth="2">
        <path d="M1 9l7.500-7.500L16 9" />
      </svg>
      <svg className="ml-[27px]" width="25" height="27" viewBox="0 0 25 27" fill="none" stroke="#e8e8e8" strokeWidth="1.500">
        <path d="M1.500 11C2 2 16 0 21 7l2 3M23.500 2v8.500H15M2 25v-7.500h8M2 18c3 5 6 7 10 7" />
        <circle cx="18.500" cy="20.500" r="6" fill="#ff9a0a" stroke="none" />
      </svg>
      <div className="ml-[25px] w-[38px] text-center text-[16.500px] leading-[23px]">
        ENG
        <br />
        IN
      </div>
      <svg className="ml-[25px]" width="26" height="20" viewBox="0 0 26 20" fill="none" stroke="#fff" strokeWidth="1.800">
        <path d="M1.500 7.500C8-.5 18-.5 24.500 7.500M5 11c4.500-5.500 11.500-5.500 16 0M8.500 14.500c2.500-3 6.500-3 9 0" />
        <circle cx="13" cy="17.500" r="2" fill="#fff" stroke="none" />
      </svg>
      <svg className="ml-[10px]" width="26" height="22" viewBox="0 0 26 22" fill="none" stroke="#fff" strokeWidth="1.600">
        <path d="M1 7.500h4.500L12 2v18l-6.500-5.500H1zM15 7.500q2.500 3.500 0 7M18 4.500q5 6.500 0 13M21 2q7 9 0 18" />
      </svg>
      <svg className="mb-[2px] ml-[9px]" width="26" height="24" viewBox="0 0 26 24" fill="none" stroke="#fff" strokeWidth="1.800">
        <path d="M11 6h8.500Q22 6 22 8.500v10q0 2.500-2.500 2.500H5Q2.500 21 2.500 18.500V13M22 11h2.500v5H22" />
        <path d="M9.500 8.500h10v10H5V14z" fill="#fff" stroke="none" />
        <path d="M5.500 0 1 7.500h3L2.500 13 9 5.500H5.700z" fill="#fff" stroke="none" />
      </svg>
      <div className="mb-[1px] ml-[18px] w-[100px] text-right text-[17px] leading-[24px] tracking-[0.350px]">
        <span className="tracking-[-0.200px]">00:08</span>
        <br />
        04-12-2024
      </div>
      <svg className="ml-[12px]" width="22" height="24" viewBox="0 0 22 24" fill="none" stroke="#fff" strokeWidth="1.800" strokeLinejoin="round">
        <path d="M11 1.500c-4.500 0-7 3.300-7 7.500v4.500L1.500 18.500h19L18 13.500V9c0-4.200-2.500-7.500-7-7.500zM8 19c0 4.500 6 4.500 6 0" />
      </svg>
    </div>
  </div>
);

export default function App() {
  return (
    <div className="flex h-[1080px] w-[1920px] flex-col overflow-hidden bg-white">
      <TabStrip />
      <Toolbar />
      <ConsoleNav />
      <Crumbs />
      <main className="flex h-[707px] shrink-0 overflow-hidden">
        <Sidebar />
        <RulesPanel />
        <div className="ml-auto flex w-[25px] flex-col items-center bg-[#f1f1f1] pt-[7px] pb-[7px]">
          <ScrollArrow d={UP} />
          <div className="mt-[299px] h-[335px] w-[21px] bg-[#c1c1c1]" />
          <span className="mt-auto h-3"><ScrollArrow d={DOWN} /></span>
        </div>
      </main>
      <ConsoleFooter />
      <Taskbar />
    </div>
  );
}
